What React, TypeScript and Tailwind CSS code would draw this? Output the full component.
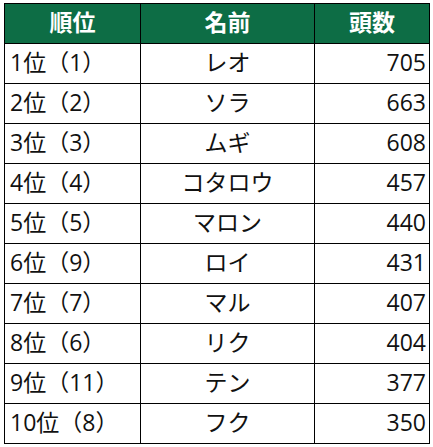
const rows = [
  { rank: "1位（1）", name: "レオ", count: 705 },
  { rank: "2位（2）", name: "ソラ", count: 663 },
  { rank: "3位（3）", name: "ムギ", count: 608 },
  { rank: "4位（4）", name: "コタロウ", count: 457 },
  { rank: "5位（5）", name: "マロン", count: 440 },
  { rank: "6位（9）", name: "ロイ", count: 431 },
  { rank: "7位（7）", name: "マル", count: 407 },
  { rank: "8位（6）", name: "リク", count: 404 },
  { rank: "9位（11）", name: "テン", count: 377 },
  { rank: "10位（8）", name: "フク", count: 350 },
]

export default function App() {
  return (
    <div className="min-h-[447px] bg-white pl-[4px] pt-[3px] font-['Open_Sans','Noto_Sans_CJK_JP',sans-serif]">
      <table className="w-[425px] table-fixed border-collapse text-[23px] leading-none text-[#111]">
        <colgroup>
          <col className="w-[136px]" />
          <col className="w-[174px]" />
          <col className="w-[115px]" />
        </colgroup>
        <thead>
          <tr className="h-[40px] bg-[#0d6d45] text-white">
            <th className="border border-black pb-[2px] font-bold">順位</th>
            <th className="border border-black pb-[2px] font-bold">名前</th>
            <th className="border border-black pb-[2px] font-bold">頭数</th>
          </tr>
        </thead>
        <tbody>
          {rows.map((r) => (
            <tr key={r.rank} className="h-[40px]">
              <td className="border border-black pb-[2px] pl-[5px] text-left">{r.rank}</td>
              <td className="border border-black pb-[2px] text-center">{r.name}</td>
              <td className="border border-black pb-[2px] pr-[3px] text-right">{r.count}</td>
            </tr>
          ))}
        </tbody>
      </table>
    </div>
  )
}
